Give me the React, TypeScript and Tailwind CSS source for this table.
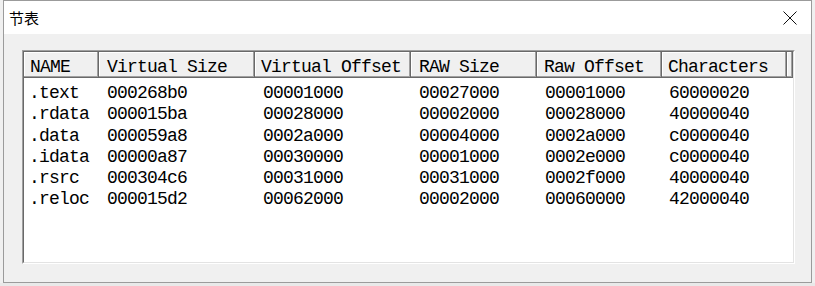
import React from "react";

const cols = [
  { name: "NAME", w: 75, pl: 6 },
  { name: "Virtual Size", w: 156, pl: 8 },
  { name: "Virtual Offset", w: 156, pl: 6 },
  { name: "RAW Size", w: 126, pl: 8 },
  { name: "Raw Offset", w: 125, pl: 7 },
  { name: "Characters", w: 125, pl: 6 },
];

const rows = [
  [".text", "000268b0", "00001000", "00027000", "00001000", "60000020"],
  [".rdata", "000015ba", "00028000", "00002000", "00028000", "40000040"],
  [".data", "000059a8", "0002a000", "00004000", "0002a000", "c0000040"],
  [".idata", "00000a87", "00030000", "00001000", "0002e000", "c0000040"],
  [".rsrc", "000304c6", "00031000", "00031000", "0002f000", "40000040"],
  [".reloc", "000015d2", "00062000", "00002000", "00060000", "42000040"],
];

const dataPl = [5, 8, 8, 8, 8, 7];

export default function App() {
  return (
    <div className="w-[815px] h-[286px] bg-[#e9e9e9] overflow-hidden flex">
      <div className="w-[3px] h-[283px] bg-[#f0f0f0]" />
      <div className="w-[809px] h-[283px] border border-[#9b9b9b] flex flex-col bg-[#f0f0f0]">
        <div className="h-[33px] bg-white flex items-center justify-between pl-[5px] pr-[14px]">
          <span className="font-['Noto_Sans_CJK_SC',sans-serif] text-[15px] text-black leading-none">节表</span>
          <svg width="14" height="14" viewBox="0 0 14 14">
            <path d="M0.5 0.5 L13.5 13.5 M13.5 0.5 L0.5 13.5" stroke="#111" strokeWidth="1" fill="none" />
          </svg>
        </div>
        <div className="flex-1 pt-[16px] pl-[18px]">
          <div className="w-[773px] h-[214px] border-t border-l border-[#a0a0a0] border-r border-b border-r-[#ffffff] border-b-[#ffffff]">
            <div className="w-full h-full border-t border-l border-[#696969] border-r border-b border-r-[#e3e3e3] border-b-[#e3e3e3] bg-white font-['Liberation_Mono',monospace] text-[18px] tracking-[-0.8px] text-black">
              <div className="flex h-[26px]">
                {cols.map((c, i) => (
                  <div
                    key={i}
                    className="h-[26px] bg-[#f0f0f0] border-r border-b border-[#696969] shadow-[inset_-1px_-1px_0_#a0a0a0,inset_1px_1px_0_#ffffff] leading-[21px] pt-[5px] whitespace-nowrap overflow-hidden"
                    style={{ width: c.w, paddingLeft: c.pl }}
                  >
                    {c.name}
                  </div>
                ))}
                <div className="flex-1 h-[26px] bg-[#f0f0f0] border-r border-b border-[#696969] shadow-[inset_-1px_-1px_0_#a0a0a0,inset_1px_1px_0_#ffffff]" />
              </div>
              <div className="pt-[5px]">
                {rows.map((r, ri) => (
                  <div key={ri} className="flex h-[21.3px] leading-[21px]">
                    {r.map((v, ci) => (
                      <div
                        key={ci}
                        className="whitespace-nowrap overflow-hidden"
                        style={{ width: cols[ci].w, paddingLeft: dataPl[ci] }}
                      >
                        {v}
                      </div>
                    ))}
                  </div>
                ))}
              </div>
            </div>
          </div>
        </div>
      </div>
      <div className="w-[3px] h-[283px] bg-[#f0f0f0]" />
    </div>
  );
}
